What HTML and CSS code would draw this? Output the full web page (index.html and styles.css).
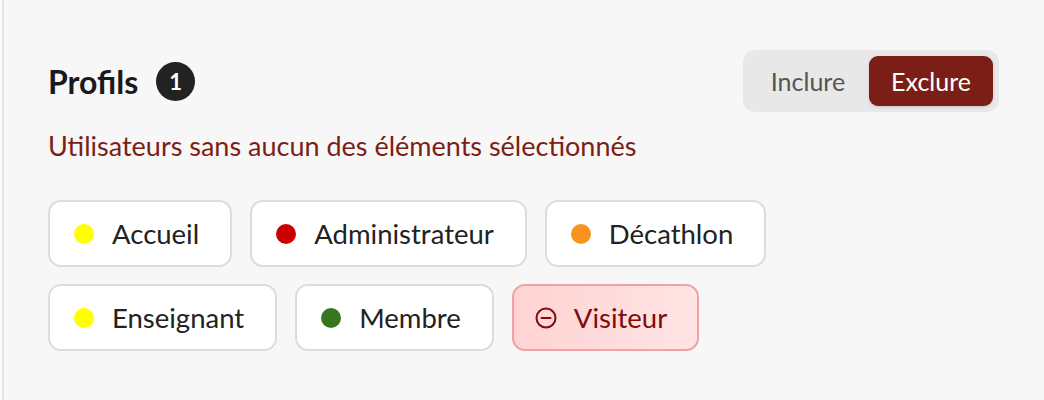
FILE: index.html
```html
<!DOCTYPE html>
<html lang="fr">
<head>
<meta charset="utf-8">
<title>Profils</title>
<link rel="stylesheet" href="styles.css">
</head>
<body>
<section class="panel">
  <header class="head">
    <h2 class="title">Profils <span class="badge">1</span></h2>
    <div class="toggle">
      <button class="seg">Inclure</button>
      <button class="seg active">Exclure</button>
    </div>
  </header>
  <p class="hint">Utilisateurs sans aucun des éléments sélectionnés</p>
  <div class="chips">
    <span class="chip"><span class="dot yellow"></span>Accueil</span>
    <span class="chip"><span class="dot red"></span>Administrateur</span>
    <span class="chip"><span class="dot orange"></span>Décathlon</span>
    <span class="chip"><span class="dot yellow"></span>Enseignant</span>
    <span class="chip"><span class="dot green"></span>Membre</span>
    <span class="chip excluded">
      <svg class="minus" viewBox="0 0 22 22" width="22" height="22" aria-hidden="true"><circle cx="11" cy="11" r="9.5" fill="none" stroke="currentColor" stroke-width="2"/><line x1="6.5" y1="11" x2="15.5" y2="11" stroke="currentColor" stroke-width="2" stroke-linecap="round"/></svg>
      Visiteur
    </span>
  </div>
</section>
</body>
</html>
```

FILE: styles.css
```css
* { box-sizing: border-box; }
html, body { margin: 0; height: 100%; }
body {
  background: #fbfbfb;
  font-family: "Lato", "Liberation Sans", sans-serif;
}
.panel {
  margin-left: 2px;
  border-left: 2px solid #e6e6e3;
  background: #f7f7f7;
  height: 100%;
  padding: 50px 45px 0 44px;
}
.head {
  display: flex;
  justify-content: space-between;
  align-items: center;
  height: 62px;
}
.title {
  margin: 0;
  display: flex;
  align-items: center;
  gap: 18px;
  font-size: 32px;
  font-weight: 700;
  color: #1a1a1a;
}
.badge {
  display: inline-flex;
  align-items: center;
  justify-content: center;
  width: 39px;
  height: 39px;
  border-radius: 50%;
  background: #222;
  color: #fff;
  font-size: 22px;
  font-weight: 700;
}
.toggle {
  display: flex;
  gap: 2px;
  padding: 6px;
  background: #e8e8e8;
  border-radius: 12px;
}
.seg {
  height: 50px;
  padding: 0 22px;
  border: 0;
  border-radius: 9px;
  background: transparent;
  font-family: inherit;
  font-size: 25px;
  color: #555;
}
.seg.active {
  background: #7b1f16;
  color: #fff;
  box-shadow: 0 1px 3px rgba(0,0,0,0.15);
}
.hint {
  margin: 18px 0 0;
  font-size: 27px;
  line-height: 32px;
  color: #7b1f16;
}
.chips {
  display: flex;
  flex-wrap: wrap;
  gap: 17px 18px;
  margin-top: 38px;
  max-width: 760px;
}
.chip {
  display: inline-flex;
  align-items: center;
  gap: 18px;
  height: 67px;
  padding: 0 31px 0 24px;
  background: #fff;
  border: 2px solid #dddcd8;
  border-radius: 13px;
  font-size: 27.5px;
  color: #222;
}
.dot {
  width: 20px;
  height: 20px;
  border-radius: 50%;
  flex: none;
}
.yellow { background: #ffff00; }
.red { background: #cc0000; }
.orange { background: #f7931e; }
.green { background: #38761d; }
.chip.excluded {
  background: linear-gradient(90deg, #ffd3d3, #ffe4e4);
  border-color: #f0a2a2;
  color: #800c0c;
  gap: 17px;
  padding-left: 21px;
  padding-right: 30px;
}
.minus { flex: none; }
```
